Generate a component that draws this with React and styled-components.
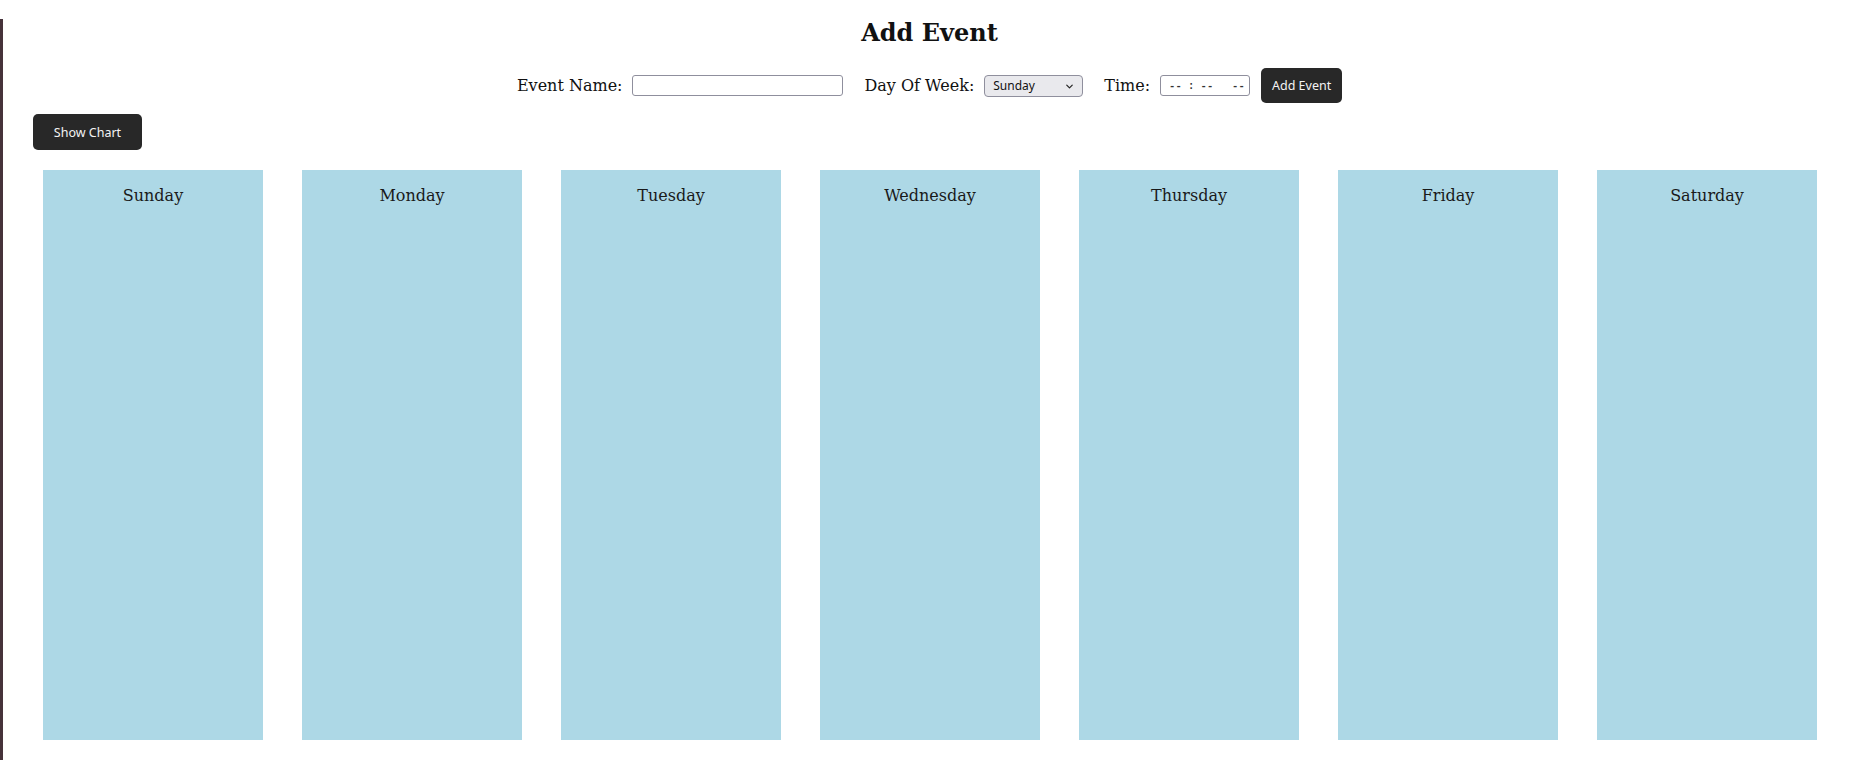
import React, { useState } from "react";
import styled, { createGlobalStyle } from "styled-components";
import { ChevronDown } from "lucide-react";

const GlobalStyle = createGlobalStyle`
  html, body {
    margin: 0;
    padding: 0;
    background: #ffffff;
  }
  body {
    font-family: "DejaVu Serif", serif;
    color: #111;
  }
`;

const Page = styled.div`
  box-sizing: border-box;
  min-height: 760px;
  border-left: 3px solid #46323a;
  padding-bottom: 20px;
`;

const Title = styled.h2`
  margin: 19px 0 0;
  font-size: 24px;
  line-height: 28px;
  font-weight: bold;
  text-align: center;
`;

const Form = styled.form`
  display: flex;
  align-items: center;
  justify-content: center;
  gap: 11px;
  margin-top: 21px;
  height: 35px;
`;

const Field = styled.label`
  display: flex;
  align-items: center;
  gap: 10px;
  font-size: 16px;
  & + & {
    margin-left: 10px;
  }
`;

const TextInput = styled.input`
  box-sizing: border-box;
  width: ${(p) => p.$width || 211}px;
  height: 21px;
  padding: 0 2px 0 8px;
  border: 1px solid #8f8f9d;
  border-radius: 3px;
  background: #fff;
  font-family: "Liberation Mono", monospace;
  font-size: 10.5px;
  font-weight: bold;
  color: #333;
  outline: none;
`;

const SelectWrap = styled.div`
  position: relative;
  width: 99px;
  height: 22px;
`;

const Select = styled.select`
  appearance: none;
  box-sizing: border-box;
  width: 100%;
  height: 100%;
  padding: 0 20px 0 8px;
  border: 1px solid #8f8f9d;
  border-radius: 4px;
  background: #e9e9ed;
  font-family: "Noto Sans", sans-serif;
  font-size: 12px;
  color: #111;
`;

const Arrow = styled(ChevronDown)`
  position: absolute;
  right: 8px;
  top: 6px;
  pointer-events: none;
`;

const DarkButton = styled.button`
  box-sizing: border-box;
  width: ${(p) => p.$width}px;
  height: ${(p) => p.$height}px;
  padding: 0;
  border: none;
  border-radius: 5px;
  background: #282828;
  color: #f4f4f4;
  font-family: "Noto Sans", sans-serif;
  font-size: 12.5px;
  cursor: pointer;
`;

const ChartRow = styled.div`
  margin: 11px 0 0 30px;
`;

const Week = styled.div`
  display: flex;
  justify-content: space-evenly;
  margin: 20px 0 0 1px;
`;

const DayColumn = styled.div`
  box-sizing: border-box;
  width: 220px;
  height: 570px;
  padding-top: 16px;
  background: lightblue;
  text-align: center;
  font-size: 16px;
  line-height: 19px;
  color: #1a1a1a;
`;

const days = [
  "Sunday",
  "Monday",
  "Tuesday",
  "Wednesday",
  "Thursday",
  "Friday",
  "Saturday",
];

export default function App() {
  const [name, setName] = useState("");
  const [day, setDay] = useState("Sunday");

  return (
    <Page>
      <GlobalStyle />
      <Title>Add Event</Title>
      <Form onSubmit={(e) => e.preventDefault()}>
        <Field>
          Event Name:
          <TextInput
            type="text"
            value={name}
            onChange={(e) => setName(e.target.value)}
          />
        </Field>
        <Field>
          Day Of Week:
          <SelectWrap>
            <Select value={day} onChange={(e) => setDay(e.target.value)}>
              {days.map((d) => (
                <option key={d} value={d}>
                  {d}
                </option>
              ))}
            </Select>
            <Arrow size={11} strokeWidth={2.6} color="#222" />
          </SelectWrap>
        </Field>
        <Field>
          Time:
          <TextInput type="text" $width={90} value={"-- : --   --"} readOnly />
        </Field>
        <DarkButton type="submit" $width={81} $height={35}>
          Add Event
        </DarkButton>
      </Form>
      <ChartRow>
        <DarkButton type="button" $width={109} $height={36}>
          Show Chart
        </DarkButton>
      </ChartRow>
      <Week>
        {days.map((d) => (
          <DayColumn key={d}>{d}</DayColumn>
        ))}
      </Week>
    </Page>
  );
}
